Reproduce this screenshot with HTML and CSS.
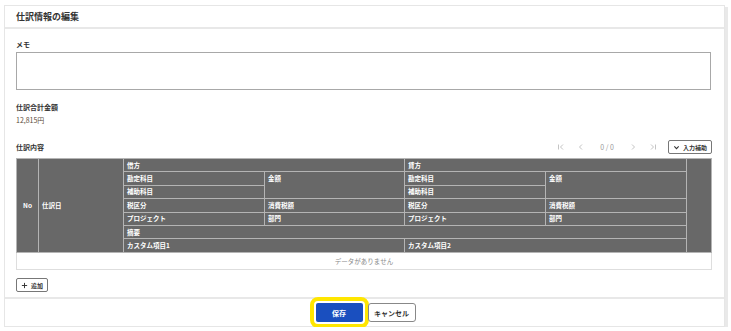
FILE: index.html
```html
<!DOCTYPE html>
<html lang="ja">

<head>
    <meta charset="UTF-8">
    <meta name="viewport" content="width=device-width, initial-scale=1.0">
    <title>仕訳情報の編集</title>
    <link rel="stylesheet" href="styles.css">
</head>

<body>
    <div class="card">
        <div class="card_head">仕訳情報の編集</div>

        <div class="card_body">
            <!-- メモ -->
            <div class="field">
                <label class="label">メモ</label>
                <textarea class="memo"></textarea>
            </div>

            <!-- 合計金額 -->
            <div class="field total">
                <div class="label">仕訳合計金額</div>
                <div class="value">12,815円</div>
            </div>

            <!-- 仕訳内容 -->
            <div class="detail_bar">
                <div class="label">仕訳内容</div>
                <div class="pager">
                    <svg width="8" height="8" viewBox="0 0 8 8"><path d="M1.5 1.5v5M6 1.5L3.5 4 6 6.5" fill="none" stroke="#c4c4c4" stroke-width="1"/></svg>
                    <svg width="8" height="8" viewBox="0 0 8 8"><path d="M5 1.5L2.5 4 5 6.5" fill="none" stroke="#c4c4c4" stroke-width="1"/></svg>
                    <span class="pager_num">0 / 0</span>
                    <svg width="8" height="8" viewBox="0 0 8 8"><path d="M3 1.5L5.5 4 3 6.5" fill="none" stroke="#c4c4c4" stroke-width="1"/></svg>
                    <svg width="8" height="8" viewBox="0 0 8 8"><path d="M2 1.5L4.5 4 2 6.5M6.5 1.5v5" fill="none" stroke="#c4c4c4" stroke-width="1"/></svg>
                </div>
                <button class="btn btn_small">
                    <svg width="7" height="7" viewBox="0 0 8 8"><path d="M1.5 2.8L4 5.3 6.5 2.8" fill="none" stroke="#333" stroke-width="1.2"/></svg>
                    入力補助
                </button>
            </div>

            <table class="journal">
                <colgroup>
                    <col style="width:22px">
                    <col style="width:85px">
                    <col style="width:141px">
                    <col style="width:140px">
                    <col style="width:141px">
                    <col style="width:141px">
                    <col style="width:25px">
                </colgroup>
                <thead>
                    <tr>
                        <th rowspan="7" class="center">No</th>
                        <th rowspan="7">仕訳日</th>
                        <th colspan="2">借方</th>
                        <th colspan="2">貸方</th>
                        <th rowspan="7"></th>
                    </tr>
                    <tr>
                        <th>勘定科目</th>
                        <th rowspan="2" class="top">金額</th>
                        <th>勘定科目</th>
                        <th rowspan="2" class="top">金額</th>
                    </tr>
                    <tr>
                        <th>補助科目</th>
                        <th>補助科目</th>
                    </tr>
                    <tr>
                        <th>税区分</th>
                        <th>消費税額</th>
                        <th>税区分</th>
                        <th>消費税額</th>
                    </tr>
                    <tr>
                        <th>プロジェクト</th>
                        <th>部門</th>
                        <th>プロジェクト</th>
                        <th>部門</th>
                    </tr>
                    <tr>
                        <th colspan="4">摘要</th>
                    </tr>
                    <tr>
                        <th colspan="2">カスタム項目1</th>
                        <th colspan="2">カスタム項目2</th>
                    </tr>
                </thead>
                <tbody>
                    <tr>
                        <td colspan="7" class="empty">データがありません</td>
                    </tr>
                </tbody>
            </table>

            <button class="btn btn_small btn_add">
                <svg width="7" height="7" viewBox="0 0 8 8"><path d="M4 1v6M1 4h6" fill="none" stroke="#333" stroke-width="1.1"/></svg>
                追加
            </button>
        </div>

        <div class="card_foot">
            <button class="btn btn_primary">保存</button>
            <button class="btn btn_default">キャンセル</button>
        </div>
    </div>
</body>

</html>
```

FILE: styles.css
```css
* {
    margin: 0;
    padding: 0;
    box-sizing: border-box;
}

body {
    font-family: "Noto Sans CJK JP", "Noto Sans", sans-serif;
    color: #333;
    background-color: #fff;
}

/* カード */
.card {
    width: 721px;
    height: 322px;
    margin: 5px 0 0 4px;
    border: 1px solid #e6e6e6;
    box-shadow: 3px 2px 0 #e9e9e9;
    display: flex;
    flex-direction: column;
}

.card_head {
    height: 23px;
    padding: 0 11px;
    font-size: 9px;
    font-weight: bold;
    line-height: 22px;
    border-bottom: 2px solid #e8e8e8;
}

.card_body {
    flex: 1;
    padding: 10px 12px 0 11px;
}

.label {
    font-size: 7px;
    font-weight: bold;
    line-height: 10px;
}

.field .label {
    display: block;
    margin-bottom: 3px;
}

.memo {
    display: block;
    width: 695px;
    height: 38px;
    border: 1px solid #a8a8a8;
    resize: none;
}

.total {
    margin-top: 12px;
}

.total .label {
    margin-bottom: 3px;
}

.value {
    font-size: 7px;
    line-height: 10px;
    color: #5a4a3a;
}

/* 仕訳内容 */
.detail_bar {
    display: flex;
    align-items: center;
    margin-top: 15px;
    height: 14px;
}

.detail_bar .label {
    flex: 1;
}

.pager {
    display: flex;
    align-items: center;
    gap: 12px;
    margin-right: 11px;
}

.pager_num {
    font-size: 7px;
    color: #999;
    padding: 0 3px;
}

.btn {
    font-family: inherit;
    font-weight: bold;
    cursor: pointer;
    display: inline-flex;
    align-items: center;
    justify-content: center;
    white-space: nowrap;
}

.btn_small {
    height: 14px;
    padding: 0 4px;
    gap: 3px;
    font-size: 6px;
    color: #333;
    background: #fff;
    border: 1px solid #777;
    border-radius: 2px;
}

/* テーブル */
.journal {
    width: 695px;
    margin-top: 4px;
    border-collapse: collapse;
    table-layout: fixed;
}

.journal th {
    height: 13.4px;
    padding: 0 3px;
    background-color: #686868;
    border: 1px solid #b4b4b4;
    color: #fff;
    font-size: 6.5px;
    font-weight: bold;
    text-align: left;
    line-height: 11px;
}

.journal th.center {
    text-align: center;
}

.journal th.top {
    vertical-align: top;
    padding-top: 1px;
}

.journal .empty {
    height: 17px;
    border: 1px solid #dedede;
    font-size: 6.5px;
    color: #888;
    text-align: center;
}

.btn_add {
    margin-top: 4px;
}

/* フッター */
.card_foot {
    height: 29px;
    border-top: 2px solid #e8e8e8;
    display: flex;
    justify-content: center;
    align-items: center;
    gap: 5px;
    padding-left: 2px;
}

.btn_primary {
    width: 47px;
    height: 19px;
    font-size: 7px;
    color: #fff;
    background-color: #1a4fbf;
    border: none;
    border-radius: 2px;
    outline: 4px solid #ffe600;
    outline-offset: 2px;
}

.btn_default {
    width: 48px;
    height: 19px;
    font-size: 7px;
    color: #333;
    background-color: #fff;
    border: 1px solid #888;
    border-radius: 3px;
}
```
